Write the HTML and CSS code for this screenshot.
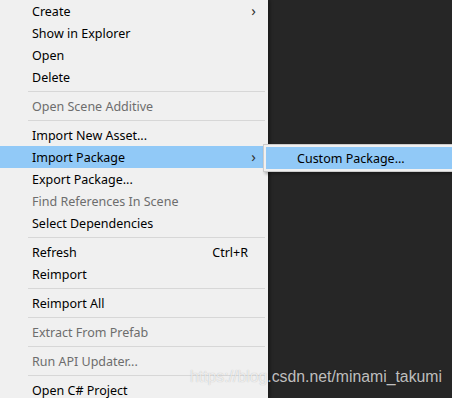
FILE: index.html
```html
<!DOCTYPE html>
<html>
<head>
<meta charset="utf-8">
<link rel="stylesheet" href="styles.css">
</head>
<body>
<div class="screen">
  <div class="menu">
    <div class="item"><span class="label">Create</span><span class="chev">&#x203A;</span></div>
    <div class="item"><span class="label">Show in Explorer</span></div>
    <div class="item"><span class="label">Open</span></div>
    <div class="item"><span class="label">Delete</span></div>
    <div class="sep"></div>
    <div class="item disabled"><span class="label">Open Scene Additive</span></div>
    <div class="sep"></div>
    <div class="item"><span class="label">Import New Asset...</span></div>
    <div class="item active"><span class="label">Import Package</span><span class="chev">&#x203A;</span></div>
    <div class="item"><span class="label">Export Package...</span></div>
    <div class="item disabled"><span class="label">Find References In Scene</span></div>
    <div class="item"><span class="label">Select Dependencies</span></div>
    <div class="sep"></div>
    <div class="item"><span class="label">Refresh</span><span class="shortcut">Ctrl+R</span></div>
    <div class="item"><span class="label">Reimport</span></div>
    <div class="sep"></div>
    <div class="item"><span class="label">Reimport All</span></div>
    <div class="sep"></div>
    <div class="item disabled"><span class="label">Extract From Prefab</span></div>
    <div class="sep"></div>
    <div class="item disabled"><span class="label">Run API Updater...</span></div>
    <div class="sep"></div>
    <div class="item"><span class="label">Open C# Project</span></div>
  </div>
  <div class="submenu">
    <div class="subitem">Custom Package...</div>
  </div>
  <div class="watermark">https://blog.csdn.net/minami_takumi</div>
</div>
</body>
</html>
```
FILE: styles.css
```css
html, body {
  margin: 0;
  padding: 0;
  background: #262626;
  overflow: hidden;
}
.screen {
  position: relative;
  width: 452px;
  height: 398px;
  display: flex;
  font-family: "Noto Sans", "Noto Sans CJK SC", sans-serif;
  font-size: 12.5px;
  color: #000;
}
.menu {
  width: 268px;
  height: 398px;
  background: #f0f0f0;
  box-shadow: 2px 0 3px rgba(0,0,0,0.35);
  display: flex;
  flex-direction: column;
  flex-shrink: 0;
}
.item {
  height: 22px;
  flex-shrink: 0;
  display: flex;
  align-items: center;
  padding-left: 32px;
  padding-right: 12px;
}
.item .label {
  flex: 1;
}
.item.disabled {
  color: #6d6d6d;
}
.item.active {
  background: #91c9f7;
}
.chev {
  font-size: 15px;
  color: #333;
  line-height: 1;
  margin-top: -2px;
}
.shortcut {
  padding-right: 8px;
}
.sep {
  flex-shrink: 0;
  height: 1px;
  margin: 3px 3px 3px 28px;
  background: #d7d7d7;
}
.submenu {
  position: absolute;
  left: 263px;
  top: 144px;
  width: 200px;
  padding: 2px;
  background: #f0f0f0;
  border: 1px solid #cccccc;
  box-shadow: 2px 2px 3px rgba(0,0,0,0.3);
}
.subitem {
  height: 22px;
  display: flex;
  align-items: center;
  padding-left: 31px;
  background: #91c9f7;
}
.watermark {
  position: absolute;
  left: 190px;
  top: 368px;
  font-family: "Liberation Sans", Arial, sans-serif;
  font-size: 15.8px;
  color: rgba(255, 255, 255, 0.72);
  text-shadow: 0 0 1px rgba(0, 0, 0, 0.25);
  white-space: nowrap;
}
```
